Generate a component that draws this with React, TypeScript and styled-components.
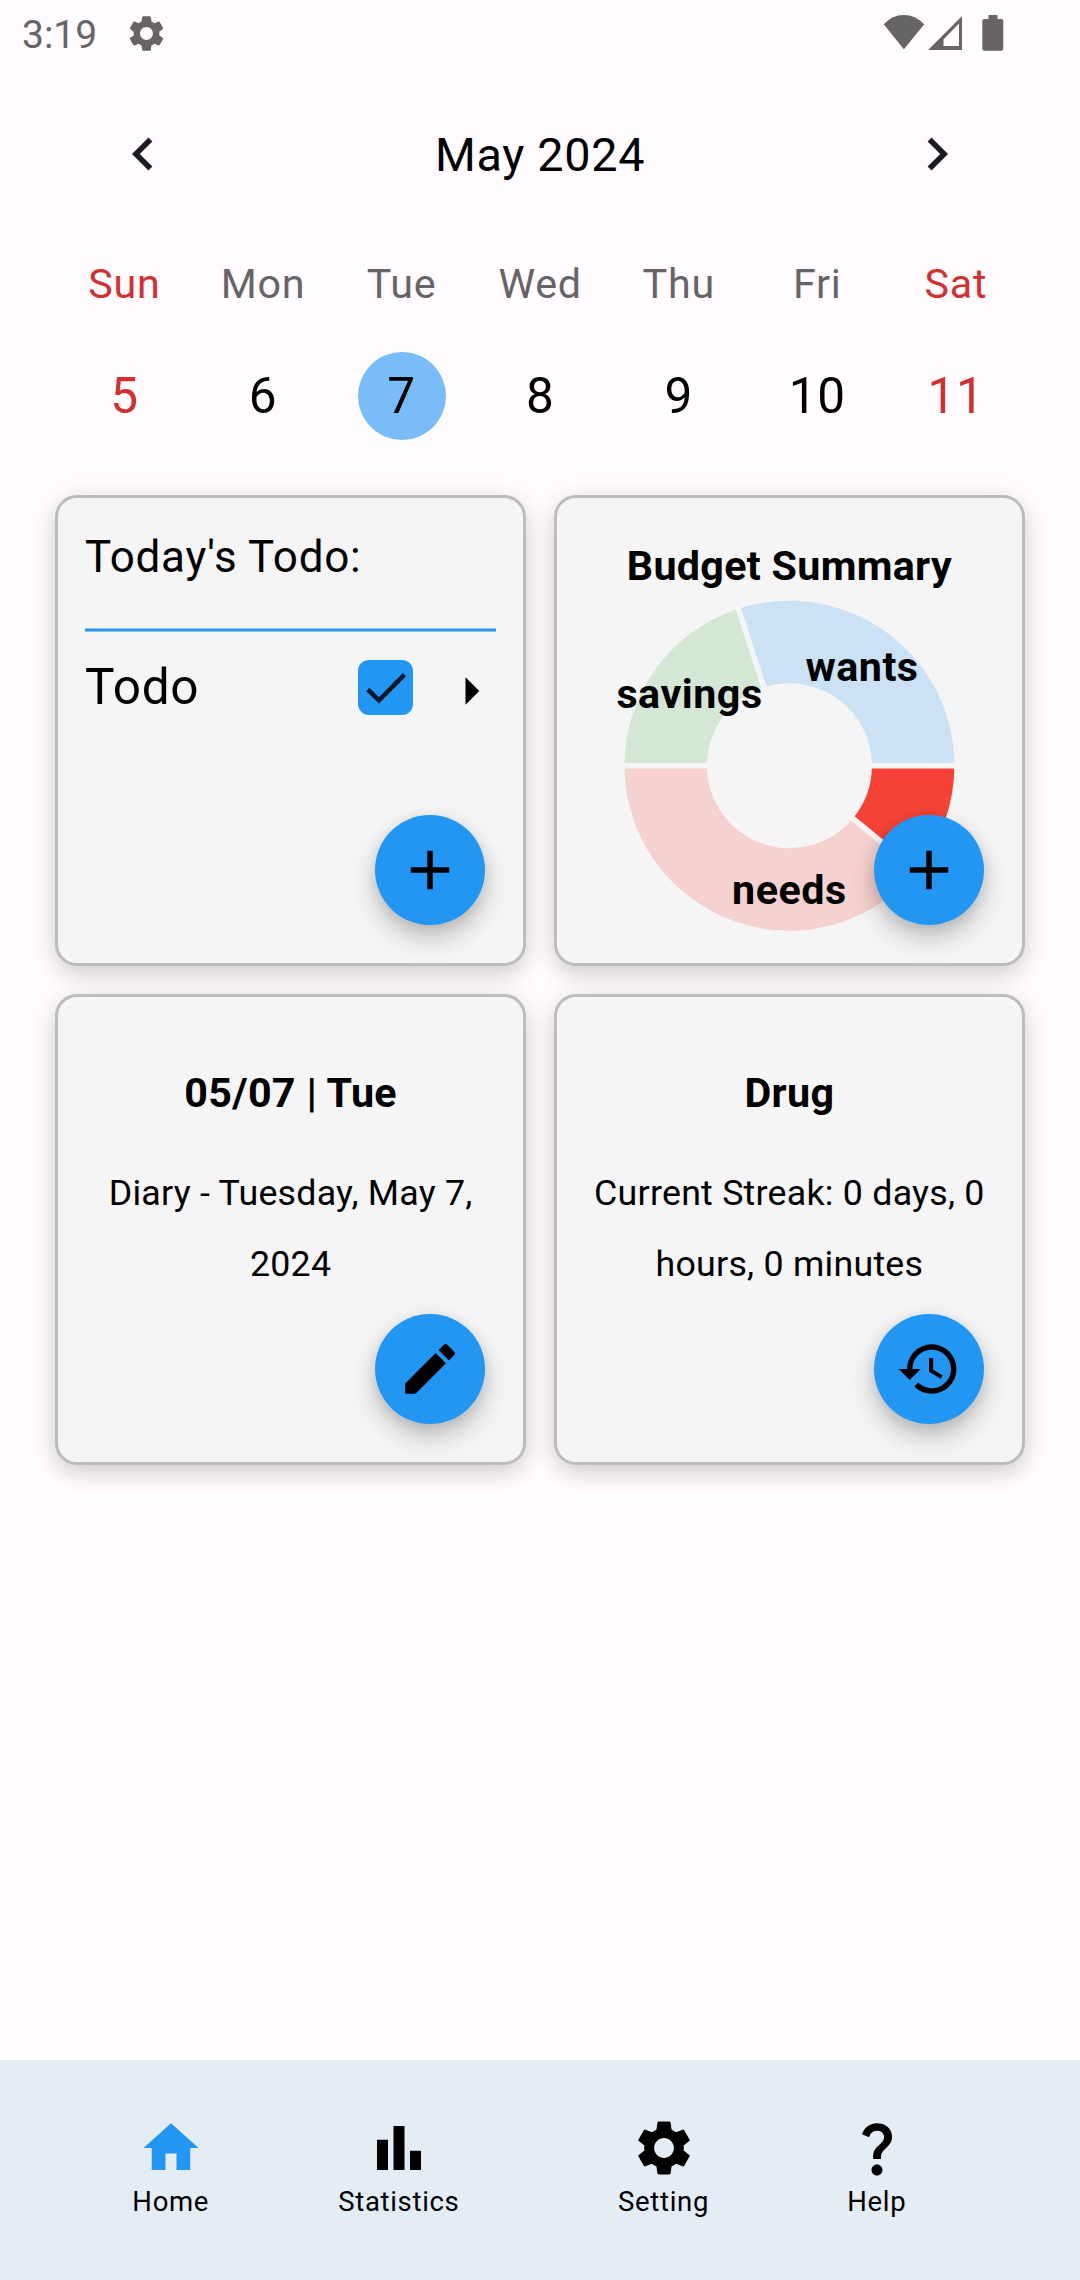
import React from "react";
import styled, { createGlobalStyle } from "styled-components";
import {
  MdAdd,
  MdArrowRight,
  MdChevronLeft,
  MdChevronRight,
  MdEdit,
  MdHistory,
  MdHome,
  MdQuestionMark,
  MdSettings,
} from "react-icons/md";

const GlobalStyle = createGlobalStyle`
  * { box-sizing: border-box; }
  body {
    margin: 0;
    background: #fffbff;
    font-family: Roboto, "Noto Sans", sans-serif;
    color: #000;
  }
  svg { display: block; flex: none; }
`;

const Screen = styled.div`
  width: 1080px;
  height: 2280px;
  display: flex;
  flex-direction: column;
  overflow: hidden;
`;

const StatusBar = styled.header`
  height: 66px;
  display: flex;
  align-items: center;
  padding: 0 76.5px 0 22px;
  color: #676468;
`;

const Clock = styled.span`
  width: 102.5px;
  padding-top: 4px;
  font-size: 39px;
`;

const StatusIcons = styled.div`
  margin-left: auto;
  display: flex;
`;

const MonthBar = styled.div`
  height: 176px;
  display: flex;
  align-items: center;
  justify-content: space-between;
  padding: 0 110px;
  color: #1c1b1f;
`;

const MonthTitle = styled.h1`
  margin: 0;
  padding-top: 2px;
  font-size: 46.75px;
  font-weight: 400;
  letter-spacing: 0.69px;
  color: #000;
`;

const Week = styled.div`
  display: grid;
  grid-template-columns: repeat(7, 1fr);
  padding: 9px 54.8px 0 55.2px;
  margin-bottom: 21px;
`;

const DayColumn = styled.div<{ $weekend: boolean }>`
  display: flex;
  flex-direction: column;
  align-items: center;
  color: ${(p) => (p.$weekend ? "#d32f2f" : "#000")};
`;

const Weekday = styled.div<{ $weekend: boolean }>`
  height: 67px;
  line-height: 67px;
  font-size: 41.25px;
  letter-spacing: 0.75px;
  color: ${(p) => (p.$weekend ? "#d32f2f" : "#676468")};
`;

const DayNumber = styled.div<{ $selected: boolean }>`
  width: 88px;
  height: 88px;
  margin: 34px 0 34px;
  border-radius: 50%;
  line-height: 88px;
  text-align: center;
  font-size: 49.5px;
  letter-spacing: 0.69px;
  background: ${(p) => (p.$selected ? "#79bdf8" : "transparent")};
`;

const CardGrid = styled.main`
  display: grid;
  grid-template-columns: repeat(2, 471.25px);
  grid-auto-rows: 471.25px;
  gap: 27.5px;
  padding: 0 55px;
`;

const Card = styled.section`
  position: relative;
  border: 3px solid #bdbdbd;
  border-radius: 22px;
  background: #f5f5f5;
  box-shadow: 0 9px 22px -1px rgba(0, 8, 0, 0.14), 0 2px 32px rgba(0, 12, 0, 0.07);
`;

const TodoCard = styled(Card)`
  padding: 0 27px;
`;

const TodoHeading = styled.h2`
  margin: 0;
  height: 119px;
  line-height: 119px;
  font-size: 44px;
  font-weight: 400;
  letter-spacing: 0.69px;
`;

const Divider = styled.div`
  height: 4px;
  margin-top: 11px;
  background: linear-gradient(#84c0f4 1px, #2f93e6 1px 3px, #84c0f4 3px);
`;

const TodoRow = styled.div`
  height: 111px;
  margin-right: -8px;
  display: flex;
  align-items: center;
`;

const TodoName = styled.span`
  flex: 1;
  margin-top: -2px;
  font-size: 49.5px;
  letter-spacing: 0.69px;
`;

const Checkbox = styled.div`
  width: 55px;
  height: 55px;
  margin-right: 25px;
  border-radius: 11px;
  background: #2196f3;
`;

const Expander = styled.div`
  padding-top: 6px;
`;

const Fab = styled.button`
  position: absolute;
  right: 38.25px;
  bottom: 38.25px;
  width: 110px;
  height: 110px;
  padding: 0;
  border: 0;
  border-radius: 50%;
  display: flex;
  align-items: center;
  justify-content: center;
  background: #2196f3;
  color: #000;
  box-shadow: 0 13px 26px rgba(0, 0, 0, 0.22), 0 3px 14px rgba(0, 0, 0, 0.09);
`;

const BudgetCard = styled(Card)`
  display: flex;
  flex-direction: column;
  align-items: center;
  padding-top: 38px;
`;

const CardTitle = styled.h2`
  margin: 0;
  line-height: 60px;
  font-size: 41.25px;
  font-weight: 700;
  letter-spacing: 0.3px;
`;

const NoteCard = styled(Card)`
  padding: 66px 30px 0;
  text-align: center;
`;

const NoteBody = styled.p`
  margin: 35px 0 0;
  line-height: 71px;
  font-size: 35.75px;
  letter-spacing: 0.24px;
`;

const NavBar = styled.nav`
  margin-top: auto;
  height: 220px;
  padding: 55px 0 0 70.75px;
  display: grid;
  grid-template-columns: 200px 256.2px 273.2px 153.4px;
  background: #e4ecf4;
`;

const NavItem = styled.div<{ $active?: boolean }>`
  display: flex;
  flex-direction: column;
  align-items: center;
  svg { color: ${(p) => (p.$active ? "#2196f3" : "#000")}; }
`;

const NavLabel = styled.span`
  padding-top: 1px;
  line-height: 40px;
  font-size: 27.5px;
  letter-spacing: 0.69px;
`;

const ChartLabel = styled.text`
  font-size: 41.25px;
  font-weight: 700;
  letter-spacing: 0.5px;
  text-anchor: middle;
`;

const OUTER = 165;
const INNER = 82.5;

const slices = [
  { from: 0, to: 39.6, color: "#f44336" },
  { from: 39.6, to: 180, color: "#f5d1cf" },
  { from: 180, to: 252, color: "#d3e7d4" },
  { from: 252, to: 360, color: "#cbe2f5" },
];

const point = (r: number, deg: number) => {
  const a = (deg * Math.PI) / 180;
  return `${(r * Math.cos(a)).toFixed(2)} ${(r * Math.sin(a)).toFixed(2)}`;
};

const slicePath = (from: number, to: number) =>
  `M${point(OUTER, from)}A${OUTER} ${OUTER} 0 0 1 ${point(OUTER, to)}` +
  `L${point(INNER, to)}A${INNER} ${INNER} 0 0 0 ${point(INNER, from)}Z`;

function BudgetChart() {
  return (
    <svg width="360" height="340" viewBox="-180.4 -169.7 360 340">
      {slices.map((s) => (
        <path key={s.from} d={slicePath(s.from, s.to)} fill={s.color} />
      ))}
      {slices.map((s) => (
        <path
          key={s.from}
          d={`M${point(INNER - 2, s.from)}L${point(OUTER + 2, s.from)}`}
          stroke="#f5f5f5"
          strokeWidth="5.5"
        />
      ))}
      <ChartLabel x="72.6" y="-84.7">wants</ChartLabel>
      <ChartLabel x="-99.9" y="-58">savings</ChartLabel>
      <ChartLabel x="0" y="138.6">needs</ChartLabel>
    </svg>
  );
}

const days = [
  { name: "Sun", date: 5 },
  { name: "Mon", date: 6 },
  { name: "Tue", date: 7 },
  { name: "Wed", date: 8 },
  { name: "Thu", date: 9 },
  { name: "Fri", date: 10 },
  { name: "Sat", date: 11 },
];

const ICON = 66;

export default function App() {
  return (
    <>
      <GlobalStyle />
      <Screen>
        <StatusBar>
          <Clock>3:19</Clock>
          <MdSettings size={43} />
          <StatusIcons>
            <svg width="122" height="38" viewBox="881.5 14 122 38" fill="currentColor">
              <path d="M903.4 49.3 883.2 24.2Q892 15 903.4 15T923.8 24.2Z" />
              <path
                fillRule="evenodd"
                d="M961.5 16V50H927.6ZM958.5 23.5 943 39.5V46H958.5Z"
              />
              <path d="M988 15h9v4h3.8q2 0 2 2v27.7q0 2-2 2H983.8q-2 0-2-2V21q0-2 2-2H988Z" />
            </svg>
          </StatusIcons>
        </StatusBar>

        <MonthBar>
          <MdChevronLeft size={ICON} />
          <MonthTitle>May 2024</MonthTitle>
          <MdChevronRight size={ICON} />
        </MonthBar>

        <Week>
          {days.map((d) => {
            const weekend = d.name === "Sun" || d.name === "Sat";
            return (
              <DayColumn key={d.name} $weekend={weekend}>
                <Weekday $weekend={weekend}>{d.name}</Weekday>
                <DayNumber $selected={d.date === 7}>{d.date}</DayNumber>
              </DayColumn>
            );
          })}
        </Week>

        <CardGrid>
          <TodoCard>
            <TodoHeading>Today's Todo:</TodoHeading>
            <Divider />
            <TodoRow>
              <TodoName>Todo</TodoName>
              <Checkbox>
                <svg width="55" height="55" viewBox="0 0 55 55" fill="none">
                  <path d="M9.8 29.5 21 40.3 46.5 14.7" stroke="#04182b" strokeWidth="4.6" />
                </svg>
              </Checkbox>
              <Expander>
                <MdArrowRight size={ICON} />
              </Expander>
            </TodoRow>
            <Fab><MdAdd size={ICON} /></Fab>
          </TodoCard>

          <BudgetCard>
            <CardTitle>Budget Summary</CardTitle>
            <BudgetChart />
            <Fab><MdAdd size={ICON} /></Fab>
          </BudgetCard>

          <NoteCard>
            <CardTitle>05/07 | Tue</CardTitle>
            <NoteBody>Diary - Tuesday, May 7, 2024</NoteBody>
            <Fab><MdEdit size={ICON} /></Fab>
          </NoteCard>

          <NoteCard>
            <CardTitle>Drug</CardTitle>
            <NoteBody>Current Streak: 0 days, 0 hours, 0 minutes</NoteBody>
            <Fab><MdHistory size={ICON} /></Fab>
          </NoteCard>
        </CardGrid>

        <NavBar>
          <NavItem $active>
            <MdHome size={ICON} />
            <NavLabel>Home</NavLabel>
          </NavItem>
          <NavItem>
            <svg width={ICON} height={ICON} viewBox="0 0 24 24" fill="currentColor">
              <path d="M4 9h4v11H4zM16 13h4v7h-4zM10 4h4v16h-4z" />
            </svg>
            <NavLabel>Statistics</NavLabel>
          </NavItem>
          <NavItem>
            <MdSettings size={ICON} />
            <NavLabel>Setting</NavLabel>
          </NavItem>
          <NavItem>
            <MdQuestionMark size={ICON} />
            <NavLabel>Help</NavLabel>
          </NavItem>
        </NavBar>
      </Screen>
    </>
  );
}
